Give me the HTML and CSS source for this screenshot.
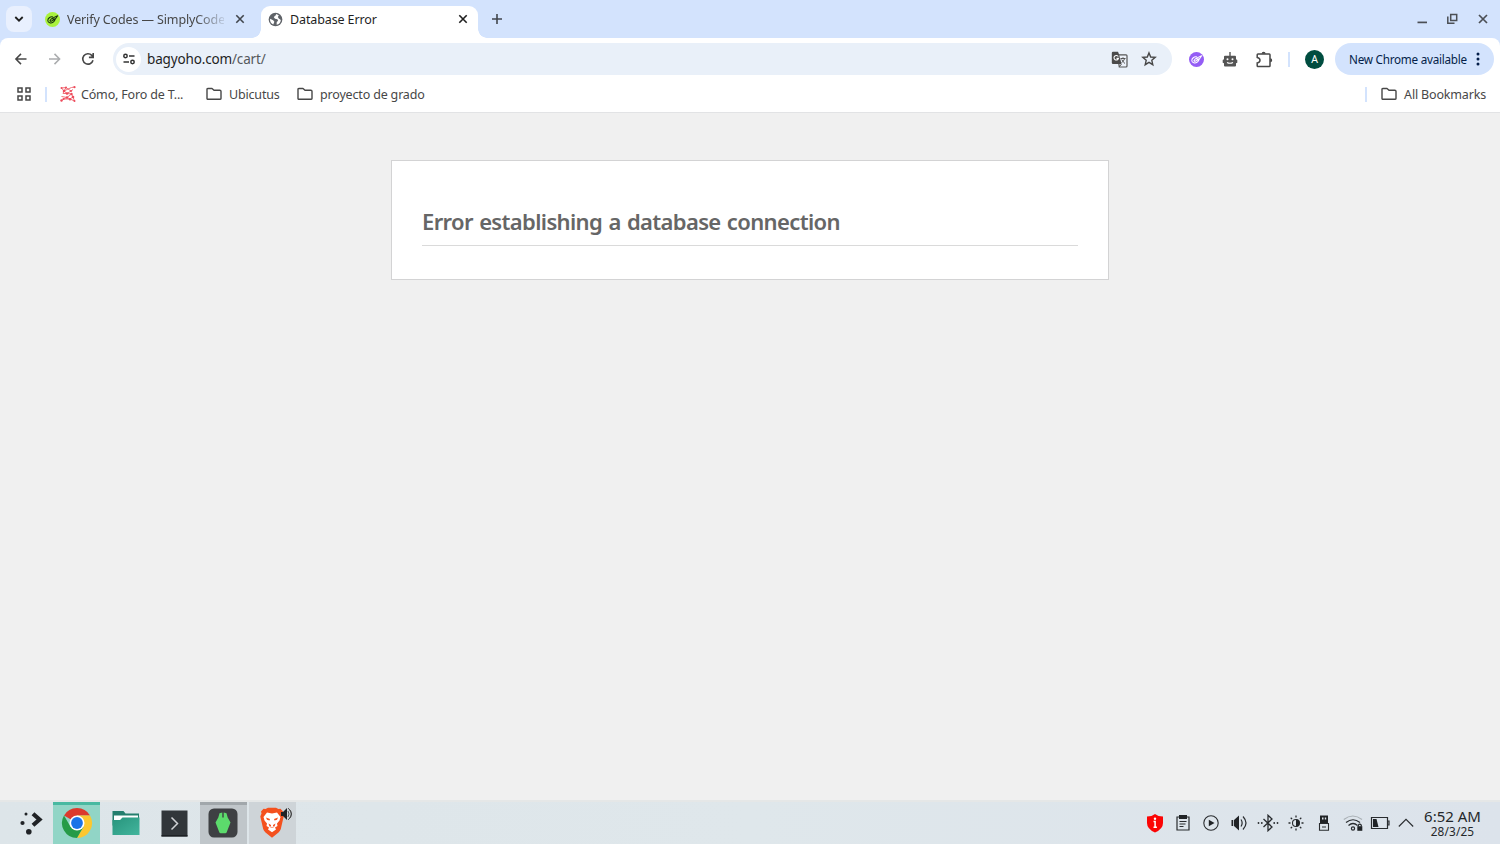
FILE: index.html
```html
<!DOCTYPE html>
<html lang="en">
<head>
<meta charset="utf-8">
<title>Database Error</title>
<link rel="stylesheet" href="styles.css">
</head>
<body>
<svg class="defs" width="0" height="0">
  <symbol id="folder" viewBox="0 0 16 14"><path d="M1 2.200Q1 1.500 2.200 1.500H6L8 3.300h5.800Q15 3.300 15 4.300V11.500Q15 12.300 13.800 12.300H2.200Q1 12.300 1 11.500Z" fill="none" stroke="#474747" stroke-width="1.400" stroke-linejoin="round"/></symbol>
  <symbol id="close" viewBox="0 0 10 10"><path d="M1.300 1.300l7.400 7.400M8.700 1.300l-7.400 7.400" fill="none" stroke="currentColor" stroke-width="1.600"/></symbol>
  <symbol id="leaf" viewBox="0 0 16 16"><path d="M8.600 5.300C5.500 4.500 2.800 7 3 9.300S6.500 12.200 8.500 11 10.500 8.500 10.900 7.800M5.300 9.300Q6.500 6.500 8.600 6.300L13.500 4 11.300 7.200 7 9.700Q5.500 10.300 5.300 9.300ZM8 7.800l2.300-.7" fill="none" stroke="currentColor" stroke-width="1.100" stroke-linejoin="round"/></symbol>
</svg>

<header class="tabstrip">
  <button class="tab-search"><svg width="10" height="8" viewBox="0 0 10 8"><path d="M1.300 2L5 5.700 8.700 2" fill="none" stroke="#1f1f1f" stroke-width="1.800"/></svg></button>
  <div class="tab">
    <span class="fav lime"><svg width="15" height="15" viewBox="0 0 15 15"><use href="#leaf" width="15" height="15"/></svg></span>
    <span class="tab-title fade">Verify Codes — SimplyCode</span>
    <svg class="tab-close" width="10" height="10"><use href="#close"/></svg>
  </div>
  <div class="tab active">
    <svg class="globe" width="15" height="15" viewBox="0 0 16 16"><circle cx="8" cy="8" r="7.300" fill="#5f6368"/><path d="M8.600 2.200Q8.800 4 7.200 4.300L6.200 5.600 7.500 7.300 10 7.600 10.800 9.200 9.300 10.600 9.200 13.600A5.800 5.800 0 0 0 13.700 8.500L11.500 7 10.500 5.200 11.500 3.400ZM2.200 7.300L5.500 8.800 6.800 10.500 5.600 13.300A5.800 5.800 0 0 1 2.200 7.300Z" fill="#fff"/></svg>
    <span class="tab-title">Database Error</span>
    <svg class="tab-close" width="10" height="10"><use href="#close"/></svg>
  </div>
  <svg class="new-tab" width="12" height="12" viewBox="0 0 12 12"><path d="M6 1v10M1 6h10" stroke="#41464d" stroke-width="1.600"/></svg>
  <div class="window-controls">
    <svg width="12" height="12" viewBox="0 0 12 12"><path d="M1.500 9.400h9.500" stroke="#4b4f55" stroke-width="1.700"/></svg>
    <svg width="12" height="12" viewBox="0 0 12 12"><path d="M3.700 1.500h6v6h-6zM.8 3.500v6.800H7.500" fill="none" stroke="#4b4f55" stroke-width="1.500"/></svg>
    <svg width="12" height="12" viewBox="0 0 12 12"><path d="M2 2l8 8M10 2l-8 8" stroke="#4b4f55" stroke-width="1.700"/></svg>
  </div>
</header>

<div class="chrome">
<nav class="toolbar">
  <div class="nav-icons">
    <svg width="14" height="14" viewBox="0 0 14 14"><path d="M12.500 7H2M7 1.900L1.900 7l5.100 5.100" fill="none" stroke="#474747" stroke-width="1.500"/></svg>
    <svg width="14" height="14" viewBox="0 0 14 14"><path d="M1 7h10.500M6.500 1.900L11.600 7l-5.100 5.100" fill="none" stroke="#aaacae" stroke-width="1.500"/></svg>
    <svg width="14" height="14" viewBox="0 0 14 14"><path d="M12 8.300A5.200 5.200 0 1 1 10.800 3.400L12 4.800M12.200 1v4.400H7.900" fill="none" stroke="#474747" stroke-width="1.600"/></svg>
  </div>
  <div class="omnibox">
    <span class="site-info"><svg width="14" height="14" viewBox="0 0 14 14"><g fill="none" stroke="#333" stroke-width="1.500"><circle cx="3.500" cy="4" r="1.700"/><circle cx="10.500" cy="10" r="1.700"/><path d="M7 4h5.500M1.500 10H7"/></g></svg></span>
    <span class="url">bagyoho.com<span class="path">/cart/</span></span>
    <svg class="translate" width="17" height="17" viewBox="0 0 17 17"><path d="M6.500 3.800H15Q16 3.800 16 4.800V15Q16 16 15 16H8.300z" fill="#edf2fa" stroke="#555" stroke-width="1.200"/><path d="M2 .8h5l1 2.500L10.500 13H2Q.8 13 .8 11.800V2Q.8.8 2 .8Z" fill="#4a4a4a"/><path d="M7.300 5.600A2.300 2.300 0 1 0 7.500 7.400H5.500" fill="none" stroke="#fff" stroke-width="1.100"/><path d="M9.500 7.500h5M12 6.300v1.200M13.600 7.700Q12.800 10 10.600 11.800M10.700 8.500Q12 11 14 12.500M8.500 15.500l2-2.500" fill="none" stroke="#555"/></svg>
    <svg class="star" width="16" height="16" viewBox="0 0 16 16"><path d="M8 1.900L9.700 6l4.500.4-3.400 2.900 1 4.400L8 11.400l-3.800 2.300 1-4.400L1.800 6.400 6.300 6z" fill="none" stroke="#474747" stroke-width="1.400"/></svg>
  </div>
  <div class="extensions">
    <span class="fav violet"><svg width="15" height="15" viewBox="0 0 15 15"><use href="#leaf" width="15" height="15"/></svg></span>
    <svg width="16" height="17" viewBox="0 0 16 17"><path d="M3 4.700h10q1 0 1 1v2.500l1.300.8v2.800l-1.300.5V14.500q0 1-1 1H3q-1 0-1-1v-2.200L.7 11.800V9L2 8.200V5.700q0-1 1-1z" fill="#555"/><path d="M7.300 1h1.400v4H7.300z" fill="#555"/><circle cx="5.500" cy="8.300" r="1" fill="#fff"/><circle cx="10.500" cy="8.300" r="1" fill="#fff"/><path d="M5 11.500q3 1.600 6 0" fill="none" stroke="#fff" stroke-width="1.100"/></svg>
    <svg class="puzzle" width="17" height="17" viewBox="0 0 17 17"><path d="M2 2.900h11.200q.8 0 .8.800v11q0 .8-.8.800H2q-.8 0-.8-.8V12Q4 11.500 4 9.300T1.200 6.500V3.700q0-.8.800-.8Z" fill="none" stroke="#474747" stroke-width="1.500"/><path d="M5.600 2.800a2 2 0 0 1 4 0zM14.200 7.300a2 2 0 0 1 0 4z" fill="#474747"/></svg>
    <i class="sep"></i>
    <span class="avatar">A</span>
  </div>
  <button class="update">New Chrome available<svg width="4" height="14" viewBox="0 0 4 14"><g fill="#041e49"><circle cx="2" cy="2" r="1.500"/><circle cx="2" cy="7" r="1.500"/><circle cx="2" cy="12" r="1.500"/></g></svg></button>
</nav>

<nav class="bookmarks">
  <svg class="apps" width="14" height="14" viewBox="0 0 14 14"><path d="M1 1h4v4H1zM9 1h4v4H9zM1 9h4v4H1zM9 9h4v4H9z" fill="none" stroke="#474747" stroke-width="1.500"/></svg>
  <i class="sep"></i>
  <svg class="network" width="16" height="16" viewBox="0 0 16 16"><g fill="none" stroke="#f0717a" stroke-width="1"><path d="M1.500 2L6 1.500 8 3l3.500-1.500L14.500 1M6 1.500L4 5 8 3M4 5l3 2.500L11.500 8 13 11l-3 2L7 11.500 3.500 13 1 15M1.500 2L4 5M8 3l3 2 2-1.500M4 5l-1 2.500L7 7.500M11 5L7 7.500M11.500 8L7 11.500M1.500 10.500L7 11.500M3.500 13L10 13l4.500 2M13 11l1.500 4"/></g><g fill="#ed4b5c"><circle cx="1.500" cy="2" r="1"/><circle cx="6" cy="1.500" r="1"/><circle cx="14.500" cy="1.200" r="1.100"/><circle cx="4" cy="5" r="1.300"/><circle cx="11" cy="5" r="1"/><circle cx="7" cy="7.500" r="1.300"/><circle cx="11.500" cy="8" r="1.200"/><circle cx="13" cy="11" r="1.300"/><circle cx="7" cy="11.500" r="1.200"/><circle cx="10" cy="13.300" r="1.200"/><circle cx="1.500" cy="14.500" r="1.200"/><circle cx="3.500" cy="13" r="1"/><circle cx="14.500" cy="15" r="1"/></g></svg>
  <span class="bm first">Cómo, Foro de T...</span>
  <svg class="dir" width="16" height="14"><use href="#folder"/></svg><span class="bm ubi">Ubicutus</span>
  <svg class="dir" width="16" height="14"><use href="#folder"/></svg><span class="bm">proyecto de grado</span>
  <div class="all"><i class="sep"></i><svg class="dir" width="16" height="14"><use href="#folder"/></svg><span class="bm">All Bookmarks</span></div>
</nav>
</div>

<main class="page">
  <section class="error-card"><h1>Error establishing a database connection</h1></section>
</main>

<footer class="taskbar">
  <div class="task launcher"><svg width="24" height="24" viewBox="0 0 24 24"><g fill="#202326"><circle cx="7" cy="3" r="1.500"/><circle cx="3.500" cy="12" r="2.100"/><circle cx="9.800" cy="20.800" r="2.800"/></g><path d="M14 2.700L20.500 8.500l-6.500 5.800" fill="none" stroke="#202326" stroke-width="4.200"/></svg></div>
  <div class="task chrome-task"><svg width="32" height="32" viewBox="0 0 32 32"><path d="M16 16L3 8.500A15 15 0 0 1 29 8.500H16z" fill="#db3a2d"/><path d="M16 8.500h13A15 15 0 0 1 16 31l6.500-11.200z" fill="#fcc72e"/><path d="M3 8.500l6.500 11.300L22.500 19.800 16 31A15 15 0 0 1 3 8.500z" fill="#259b48"/><circle cx="16" cy="16" r="7.500" fill="#fff"/><circle cx="16" cy="16" r="5.900" fill="#1a73e8"/></svg></div>
  <div class="task files"><svg width="28" height="26" viewBox="0 0 28 26"><path d="M.5 1h11l2 2.500H27v12H.5z" fill="#247e6d"/><path d="M2 5.500h24V13H2z" fill="#fff"/><path d="M.5 10H8l2.500-2.500H27.500V25H.5z" fill="url(#tealfade)"/><defs><linearGradient id="tealfade" x1="0" y1="0" x2="1" y2="1"><stop stop-color="#27947c"/><stop offset="1" stop-color="#43b59d"/></linearGradient></defs></svg></div>
  <div class="task terminal"><svg width="27" height="27" viewBox="0 0 27 27"><path d="M.5.500h26v26H.5z" fill="#31363a"/><path d="M.5 25h26v1.500H.5z" fill="#1d2124"/><path d="M10.500 7.500l6 6-6 6" fill="none" stroke="#d0d3d5" stroke-width="1.500"/></svg></div>
  <div class="task open"><svg width="30" height="30" viewBox="0 0 30 30"><rect x=".5" y=".5" width="29" height="29" rx="5.500" fill="#3e4043"/><path d="M11.500 5.200L14.300 4.500V9.500h1.400V4.500l2.800.7 1.200 4.300 2.800 5-3.800 9.800q-.3 1-1.400 1h-4.600q-1.100 0-1.400-1L7.500 14.500l2.800-5z" fill="#5cdb6c"/></svg></div>
  <div class="task brave"><svg width="26" height="32" viewBox="0 0 26 32"><path d="M6.500 2L9 .8h8L19.500 2l2-.2L24 4.500l-.5 2 1.200 3L21.800 22q-.5 2-2.300 3.400L13 30.800 6.500 25.400Q4.700 24 4.200 22L1.300 9.500l1.200-3L2 4.500l2.500-2.700z" fill="#f4511e"/><path d="M8 5.500L13 6.500 18 5.500 21.500 10 20.500 13.500 18 16.500 18.500 19 16 20.500 17 22.500 13 25.300 9 22.500 10 20.500 7.500 19 8 16.500 5.500 13.500 4.500 10Z" fill="#fff"/><path d="M7 10.500l4 1.500-.5 1.500-2.500-.8zM19 10.500l-4 1.500.5 1.500 2.500-.8zM9.500 16.500l2.500 1.500v1.500l-1.500 0zM16.500 16.500L14 18v1.500l1.500 0zM10.500 21l2.500-1.300 2.500 1.300-2.500-.4z" fill="#f4511e"/></svg>
    <svg class="audio" width="12" height="12" viewBox="0 0 12 12"><path d="M0 4h2l4-4v12L2 8H0z" fill="#202326"/><path d="M7 3q2 3 0 6M8.500 1.500q3.500 4.500 0 9M7 0q7 6 0 12" fill="none" stroke="#333" stroke-width=".8"/></svg></div>
  <div class="tray">
    <svg width="18" height="20" viewBox="0 0 18 20"><path d="M9 1Q12 3.500 17 3.500V10q0 6-8 9.500Q1 16 1 10V3.500Q6 3.500 9 1Z" fill="#fb0505"/><path d="M7.500 8.500h1.600V14M7.500 14.200h3.400" fill="none" stroke="#fff" stroke-width="1.500"/><circle cx="9" cy="5.800" r="1.200" fill="#fff"/></svg>
    <svg width="18" height="18" viewBox="0 0 18 18"><path d="M3 3h12v13H3zM5.500 7.500h7M5.500 10h6M5.500 12.500h4" fill="none" stroke="#292c2f" stroke-width="1.200"/><path d="M5 1h8v4H5z" fill="#202326"/></svg>
    <svg width="18" height="18" viewBox="0 0 18 18"><circle cx="9" cy="9" r="7.200" fill="none" stroke="#292c2f" stroke-width="1.100"/><path d="M6.800 5.800L12.500 9l-5.700 3.200z" fill="#202326"/></svg>
    <svg width="18" height="18" viewBox="0 0 18 18"><path d="M1.500 6h1.700v6H1.500zM4 6l5-4.500v15L4 12z" fill="#202326"/><path d="M11 5.500q2.300 3.500 0 7M13 2.500q6 6.500 0 13" fill="none" stroke="#292c2f" stroke-width="1.200"/></svg>
    <svg class="bluetooth" width="22" height="18" viewBox="0 0 22 18"><path d="M6.500 5l8.500 8-4 3.700V1.300L15 5l-8.500 8" fill="none" stroke="#292c2f" stroke-width="1.300"/><g fill="#292c2f"><circle cx="1.500" cy="9" r=".9"/><circle cx="4.800" cy="9" r=".9"/><circle cx="17.200" cy="9" r=".9"/><circle cx="20.500" cy="9" r=".9"/></g></svg>
    <svg width="18" height="18" viewBox="0 0 18 18"><circle cx="9" cy="9" r="3.500" fill="none" stroke="#292c2f" stroke-width="1.100"/><path d="M9 5.500a3.500 3.500 0 0 1 0 7z" fill="#202326"/><path d="M9 1.500v2M9 14.500v2M1.500 9h2M14.500 9h2M3.700 3.700l1.400 1.400M12.900 12.900l1.400 1.400M14.300 3.700l-1.400 1.400M5.100 12.900l-1.400 1.400" stroke="#292c2f" stroke-width="1.300"/></svg>
    <svg width="18" height="18" viewBox="0 0 18 18"><path d="M5 1.500h8V9H5z" fill="#202326"/><path d="M7 3.500h1.500v2H7zM9.800 3.500h1.400v2H9.800z" fill="#dfe6ec"/><path d="M4.500 9.500h9v6.700h-9zM7 13h4" fill="none" stroke="#292c2f" stroke-width="1.100"/></svg>
    <svg width="20" height="18" viewBox="0 0 20 18"><g fill="none" stroke="#292c2f" stroke-width="1.200"><path d="M.8 5.500q9-7 18.200 0" stroke="#a9b0b5"/><path d="M3 8.500q7-5.500 14 0M5.500 11.500q4.500-4 9 0"/><circle cx="10" cy="14.500" r="1.600"/><path d="M15.300 12.500v-1.300q1.500-2 3 0v1.300"/></g><path d="M14.300 12.200h5v4.600h-5z" fill="#202326"/></svg>
    <svg class="battery" width="20" height="18" viewBox="0 0 20 18"><path d="M1.500 3.500h16v11h-16zM17.500 7h1.500v4h-1.500" fill="none" stroke="#292c2f" stroke-width="1.200"/><path d="M3 5h3.500l2 8H3z" fill="#202326"/></svg>
    <svg width="18" height="18" viewBox="0 0 18 18"><path d="M1.800 12.500L9 5.300l7.200 7.200" fill="none" stroke="#292c2f" stroke-width="1.100"/></svg>
  </div>
  <div class="clock"><span class="time">6:52 AM</span><span class="date">28/3/25</span></div>
</footer>
</body>
</html>
```
FILE: styles.css
```css
* { box-sizing: border-box; }
body { margin: 0; width: 1500px; height: 844px; overflow: hidden; display: flex; flex-direction: column; background: #d3e3fd; font-family: "Noto Sans", sans-serif; color: #474747; }
svg { display: block; flex: none; }
.defs { display: none; }
button { border: 0; padding: 0; font: inherit; }

.tabstrip { height: 38px; flex: none; display: flex; padding: 6px 6px 0; }
.tab-search { width: 26px; height: 26px; border-radius: 8px; background: #e9f0fe; display: flex; align-items: center; justify-content: center; }
.tab { width: 229px; height: 26px; padding-left: 13px; display: flex; align-items: center; font-size: 12.500px; letter-spacing: -.12px; position: relative; }
.fav { width: 15px; height: 15px; border-radius: 50%; flex: none; }
.lime { background: #a9f23d; color: #17310c; }
.tab-title { margin-left: 7px; width: 157px; padding-top: 2px; white-space: nowrap; line-height: 18px; }
.fade { -webkit-mask-image: linear-gradient(90deg, #000 82%, rgba(0,0,0,.15)); mask-image: linear-gradient(90deg, #000 82%, rgba(0,0,0,.15)); }
.tab-close { margin-left: 11px; color: #41464d; }
.tab.active { width: 217px; height: 32px; padding: 0 0 6px 7px; background: #fff; border-radius: 9px 9px 0 0; color: #1f1f1f; }
.active::before, .active::after { content: ""; position: absolute; bottom: 0; width: 9px; height: 9px; }
.active::before { left: -9px; background: radial-gradient(circle at 0 0, transparent 8.500px, #fff 9px); }
.active::after { right: -9px; background: radial-gradient(circle at 100% 0, transparent 8.500px, #fff 9px); }
.active .tab-close { color: #1f1f1f; }
.new-tab { margin: 7px 0 0 13px; }
.window-controls { margin: 7px 5px 0 auto; display: flex; gap: 18.500px; }

.chrome { height: 75px; flex: none; background: #fff; border-radius: 8px 8px 0 0; border-bottom: 1px solid #e2e3e5; }
.toolbar { height: 42px; padding-right: 6px; display: flex; align-items: center; }
.nav-icons { width: 113px; padding-left: 14px; display: flex; gap: 19.700px; flex: none; }
.omnibox { width: 1059px; height: 32px; border-radius: 16px; background: #e9f0f9; padding: 0 15px 0 3px; display: flex; align-items: center; }
.site-info { width: 25px; height: 25px; border-radius: 50%; background: #fff; display: flex; align-items: center; justify-content: center; }
.url { flex: 1; margin-left: 6px; font-size: 13.500px; letter-spacing: -.15px; line-height: 20px; color: #1f1f1f; }
.path { color: #55585c; }
.star { margin-left: 13px; }
.extensions { display: flex; align-items: center; padding-left: 17px; width: 163px; gap: 17.500px; }
.puzzle { margin: 0 -1px 0 1px; }
.violet { background: #945df5; color: #fff; }
.sep { display: block; width: 2px; height: 15px; background: #d3e3fd; flex: none; }
.extensions .sep { margin-left: -2px; }
.avatar { width: 19px; height: 19px; margin-left: -2px; border-radius: 50%; background: #004d40; color: #fff; font-size: 10.500px; line-height: 19px; text-align: center; flex: none; }
.update { width: 159px; height: 32px; padding: 0 14px; border-radius: 16px; background: #d3e3fd; color: #041e49; font-size: 11.700px; letter-spacing: -.24px; display: flex; align-items: center; justify-content: space-between; white-space: nowrap; }

.bookmarks { height: 32px; padding: 0 14px 4px 17px; display: flex; align-items: center; font-size: 12.500px; letter-spacing: -.17px; }
.apps { margin-right: 14px; }
.network { margin-left: 13px; }
.bm { padding-top: 2px; line-height: 18px; white-space: nowrap; margin-left: 7px; }
.first { width: 120px; margin-left: 5px; }
.ubi { width: 68px; }
.all { margin-left: auto; display: flex; align-items: center; }
.first + .dir { margin-left: 5px; }
.all .dir { margin-left: 14px; }

.page { flex: 1; background: #f0f0f0; padding-top: 47px; }
.error-card { width: 718px; height: 120px; margin: 0 auto; padding: 48px 30px 0; background: #fff; border: 1px solid #d3d3d4; }
h1 { margin: 0; height: 37px; border-bottom: 1px solid #dadada; color: #666; font-size: 22px; letter-spacing: -.64px; word-spacing: 1.200px; font-weight: 600; line-height: 25px; white-space: nowrap; }

.taskbar { height: 44px; flex: none; border-top: 2px solid #e5e7e7; background: linear-gradient(90deg, #dde5e9, #dfe7eb 50%, #dce3eb); display: flex; }
.task { width: 47px; margin-right: 2px; display: flex; align-items: center; justify-content: center; position: relative; }
.launcher { width: 51px; padding-left: 11px; }
.chrome-task { background: #91d5c6; border-top: 3px solid #48b9a1; padding-bottom: 3px; }
.open { background: #c0c6ca; border-top: 3px solid #a1a7ab; padding: 0 1px 3px 0; }
.brave { background: #ced4d8; padding-right: 2px; }
.audio { position: absolute; top: 6px; left: 32px; }
.tray { margin-left: auto; display: flex; align-items: center; gap: 10px; }
.bluetooth { margin: 0 -2px 0 -1px; }
.battery { margin: 0 -3px; }
.clock { width: 85px; padding: 6px 10px 0 0; display: flex; flex-direction: column; align-items: center; color: #24272a; white-space: nowrap; }
.time { font-size: 15px; line-height: 17px; }
.date { font-size: 11.800px; line-height: 12px; letter-spacing: .15px; }
```
